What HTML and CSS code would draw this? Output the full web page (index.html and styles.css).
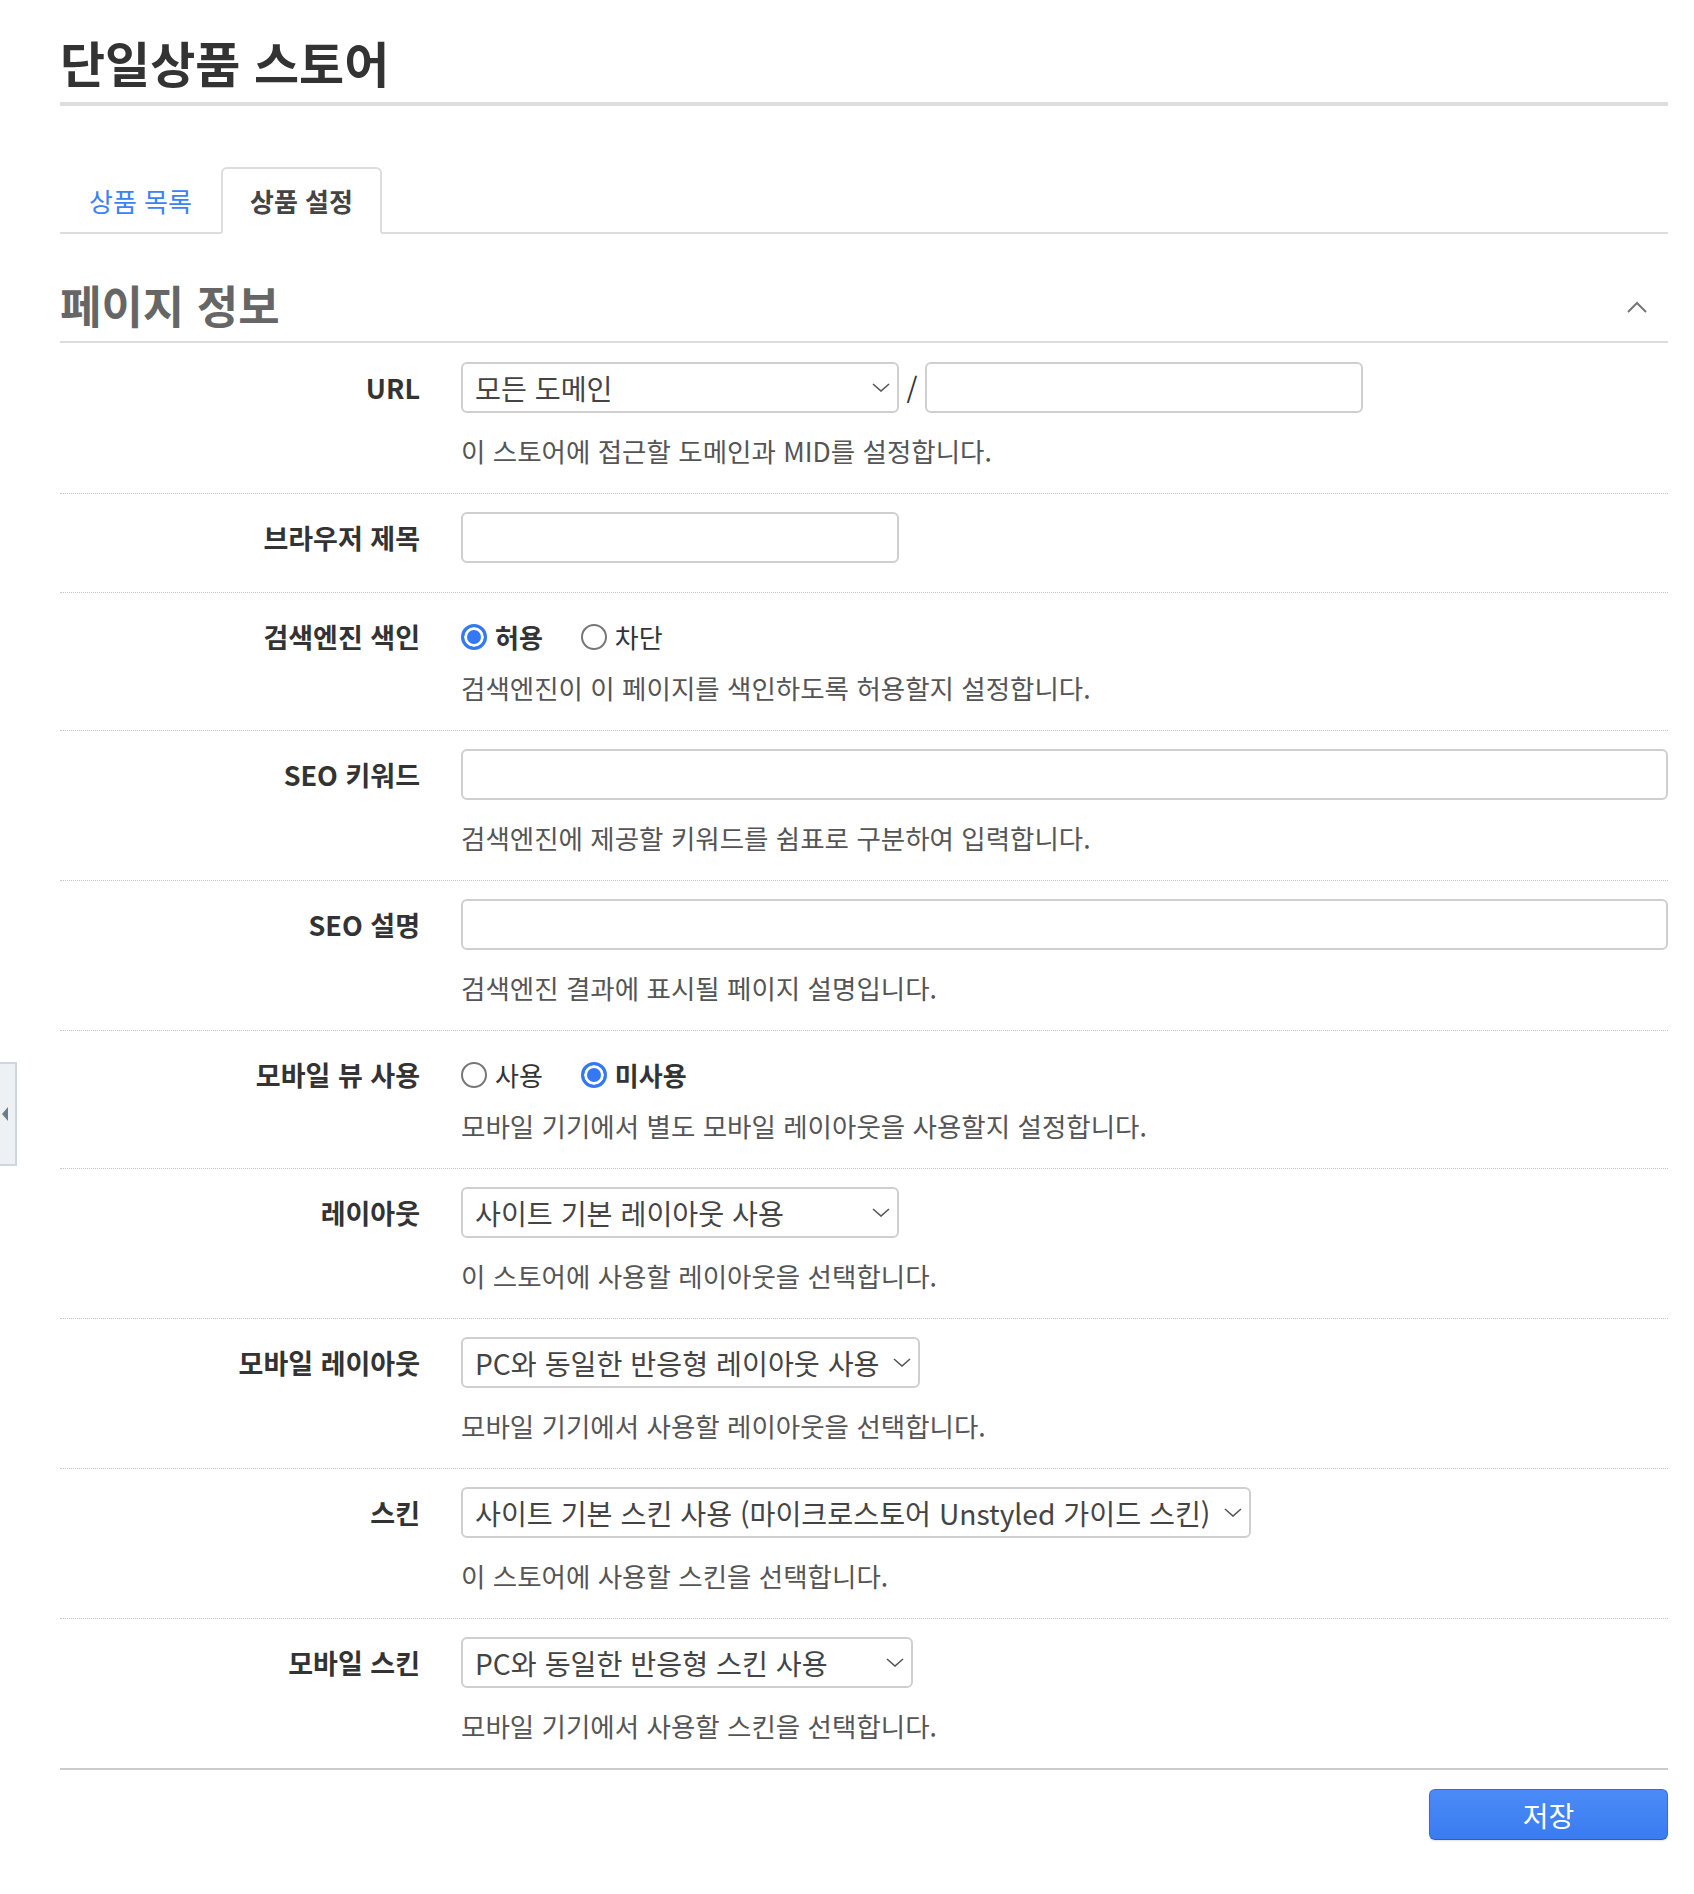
FILE: index.html
```html
<!DOCTYPE html>
<html lang="ko">
<head>
<meta charset="utf-8">
<title>단일상품 스토어</title>
<link rel="stylesheet" href="styles.css">
</head>
<body>
<div class="side-tab"><span class="side-arrow"></span></div>
<div class="page">
  <h1 class="title">단일상품 스토어</h1>
  <ul class="tabs">
    <li class="tab">상품 목록</li>
    <li class="tab active">상품 설정</li>
  </ul>
  <div class="section-head">
    <h2>페이지 정보</h2>
    <svg class="collapse" width="20" height="12" viewBox="0 0 20 12"><polyline points="1,11 10,2 19,11" fill="none" stroke="#777" stroke-width="2"/></svg>
  </div>
  <div class="form">
    <div class="row first">
      <div class="label">URL</div>
      <div class="field">
        <div class="controls">
          <div class="select w-438"><span class="val">모든 도메인</span><svg class="arrow" width="18" height="9" viewBox="0 0 18 9"><polyline points="1,1 9,8 17,1" fill="none" stroke="#555" stroke-width="1.6"/></svg></div>
          <span class="slash">/</span>
          <div class="input w-438"></div>
        </div>
        <p class="desc">이 스토어에 접근할 도메인과 MID를 설정합니다.</p>
      </div>
    </div>
    <div class="row no-desc">
      <div class="label">브라우저 제목</div>
      <div class="field">
        <div class="controls"><div class="input w-438"></div></div>
      </div>
    </div>
    <div class="row radio-row">
      <div class="label">검색엔진 색인</div>
      <div class="field">
        <div class="radios">
          <span class="radio on"><span class="dot"></span>허용</span>
          <span class="radio"><span class="dot"></span>차단</span>
        </div>
        <p class="desc">검색엔진이 이 페이지를 색인하도록 허용할지 설정합니다.</p>
      </div>
    </div>
    <div class="row">
      <div class="label">SEO 키워드</div>
      <div class="field">
        <div class="controls"><div class="input full"></div></div>
        <p class="desc">검색엔진에 제공할 키워드를 쉼표로 구분하여 입력합니다.</p>
      </div>
    </div>
    <div class="row">
      <div class="label">SEO 설명</div>
      <div class="field">
        <div class="controls"><div class="input full"></div></div>
        <p class="desc">검색엔진 결과에 표시될 페이지 설명입니다.</p>
      </div>
    </div>
    <div class="row radio-row">
      <div class="label">모바일 뷰 사용</div>
      <div class="field">
        <div class="radios">
          <span class="radio"><span class="dot"></span>사용</span>
          <span class="radio on"><span class="dot"></span>미사용</span>
        </div>
        <p class="desc">모바일 기기에서 별도 모바일 레이아웃을 사용할지 설정합니다.</p>
      </div>
    </div>
    <div class="row">
      <div class="label">레이아웃</div>
      <div class="field">
        <div class="controls">
          <div class="select w-438"><span class="val">사이트 기본 레이아웃 사용</span><svg class="arrow" width="18" height="9" viewBox="0 0 18 9"><polyline points="1,1 9,8 17,1" fill="none" stroke="#555" stroke-width="1.6"/></svg></div>
        </div>
        <p class="desc">이 스토어에 사용할 레이아웃을 선택합니다.</p>
      </div>
    </div>
    <div class="row">
      <div class="label">모바일 레이아웃</div>
      <div class="field">
        <div class="controls">
          <div class="select w-459"><span class="val">PC와 동일한 반응형 레이아웃 사용</span><svg class="arrow" width="18" height="9" viewBox="0 0 18 9"><polyline points="1,1 9,8 17,1" fill="none" stroke="#555" stroke-width="1.6"/></svg></div>
        </div>
        <p class="desc">모바일 기기에서 사용할 레이아웃을 선택합니다.</p>
      </div>
    </div>
    <div class="row">
      <div class="label">스킨</div>
      <div class="field">
        <div class="controls">
          <div class="select w-790"><span class="val">사이트 기본 스킨 사용 (마이크로스토어 Unstyled 가이드 스킨)</span><svg class="arrow" width="18" height="9" viewBox="0 0 18 9"><polyline points="1,1 9,8 17,1" fill="none" stroke="#555" stroke-width="1.6"/></svg></div>
        </div>
        <p class="desc">이 스토어에 사용할 스킨을 선택합니다.</p>
      </div>
    </div>
    <div class="row last">
      <div class="label">모바일 스킨</div>
      <div class="field">
        <div class="controls">
          <div class="select w-452"><span class="val">PC와 동일한 반응형 스킨 사용</span><svg class="arrow" width="18" height="9" viewBox="0 0 18 9"><polyline points="1,1 9,8 17,1" fill="none" stroke="#555" stroke-width="1.6"/></svg></div>
        </div>
        <p class="desc">모바일 기기에서 사용할 스킨을 선택합니다.</p>
      </div>
    </div>
  </div>
  <div class="actions">
    <button class="btn" type="button">저장</button>
  </div>
</div>
</body>
</html>
```

FILE: styles.css
```css
html, body {
  margin: 0;
  padding: 0;
  background: #fff;
}
body {
  font-family: "Noto Sans CJK KR", "Noto Sans", sans-serif;
  color: #333;
  position: relative;
  min-height: 1894px;
}
.page {
  padding: 0 26px 40px 60px;
}
.title {
  margin: 31px 0 0;
  font-size: 49px;
  line-height: 62px;
  font-weight: 700;
  color: #333;
  padding-bottom: 9px;
  border-bottom: 4px solid #dedede;
}
.tabs {
  list-style: none;
  margin: 61px 0 0;
  padding: 0;
  display: flex;
  border-bottom: 2px solid #dddddd;
}
.tab {
  height: 63px;
  line-height: 63px;
  padding: 0 27px;
  font-size: 26px;
  color: #3b82f6;
  border: 2px solid transparent;
  margin-bottom: -2px;
}
.tab.active {
  color: #444;
  font-weight: 700;
  border-color: #dddddd;
  border-bottom-color: #fff;
  border-radius: 6px 6px 0 0;
  background: #fff;
}
.section-head {
  margin-top: 43px;
  display: flex;
  align-items: center;
  justify-content: space-between;
  padding-bottom: 8px;
  border-bottom: 2px solid #dddddd;
}
.section-head h2 {
  margin: 0;
  font-size: 45px;
  line-height: 56px;
  font-weight: 700;
  color: #666;
}
.collapse {
  margin-right: 21px;
  margin-top: 4px;
}
.form {
  border-bottom: 2px solid #cccccc;
}
.row {
  display: grid;
  grid-template-columns: 360px 1fr;
  column-gap: 41px;
  padding: 18px 0 23px;
  border-bottom: 1px dotted #c4c4c4;
}
.row.first {
  padding-top: 19px;
}
.row.no-desc {
  padding-bottom: 29px;
}
.row.last {
  border-bottom: 0;
}
.label {
  text-align: right;
  font-size: 27px;
  line-height: 51px;
  font-weight: 700;
  color: #333;
}
.field {
  min-width: 0;
}
.controls {
  display: flex;
  align-items: center;
  height: 51px;
}
.select,
.input {
  box-sizing: border-box;
  height: 51px;
  border: 2px solid #cfcfcf;
  border-radius: 6px;
  background: #fff;
}
.select {
  display: flex;
  align-items: center;
  justify-content: space-between;
  padding: 0 7px 0 12px;
  font-size: 28.2px;
  color: #444;
  overflow: hidden;
}
.select .val {
  white-space: nowrap;
}
.select .arrow {
  flex: none;
  margin-left: 8px;
}
.w-438 { width: 438px; }
.w-459 { width: 459px; }
.w-452 { width: 452px; }
.w-790 { width: 790px; }
.input.full {
  flex: 1;
}
.slash {
  width: 26px;
  text-align: center;
  font-size: 28px;
  color: #333;
}
.desc {
  margin: 19px 0 0;
  font-size: 26.5px;
  line-height: 38px;
  color: #555;
}
.radio-row .desc {
  margin-top: 7px;
}
.radios {
  display: flex;
  align-items: center;
  height: 51px;
  gap: 38px;
}
.radio {
  display: flex;
  align-items: center;
  gap: 8px;
  font-size: 26px;
  color: #333;
}
.radio .dot {
  box-sizing: border-box;
  width: 26px;
  height: 26px;
  border-radius: 50%;
  border: 2px solid #777;
  background: #fff;
}
.radio.on {
  font-weight: 700;
}
.radio.on .dot {
  border: 3px solid #3478f6;
  background: #3478f6;
  box-shadow: inset 0 0 0 3px #fff;
}
.actions {
  display: flex;
  justify-content: flex-end;
  padding-top: 19px;
}
.btn {
  width: 239px;
  height: 51px;
  border-radius: 6px;
  border: 1px solid #2f6fdc;
  border-bottom-color: #2a60c4;
  background: linear-gradient(#4a8bf6, #3a7cf1);
  color: #fff;
  font-family: "Noto Sans CJK KR", "Noto Sans", sans-serif;
  font-size: 28px;
  padding: 0;
  box-shadow: 0 1px 2px rgba(0, 0, 0, 0.12);
}
.side-tab {
  position: absolute;
  left: 0;
  top: 1062px;
  width: 15px;
  height: 100px;
  background: #eef1f4;
  border: 2px solid #cfd6dd;
  border-left: 0;
  display: flex;
  align-items: center;
}
.side-arrow {
  width: 0;
  height: 0;
  margin-left: 2px;
  border-top: 7px solid transparent;
  border-bottom: 7px solid transparent;
  border-right: 6px solid #6d7c8b;
}
```
